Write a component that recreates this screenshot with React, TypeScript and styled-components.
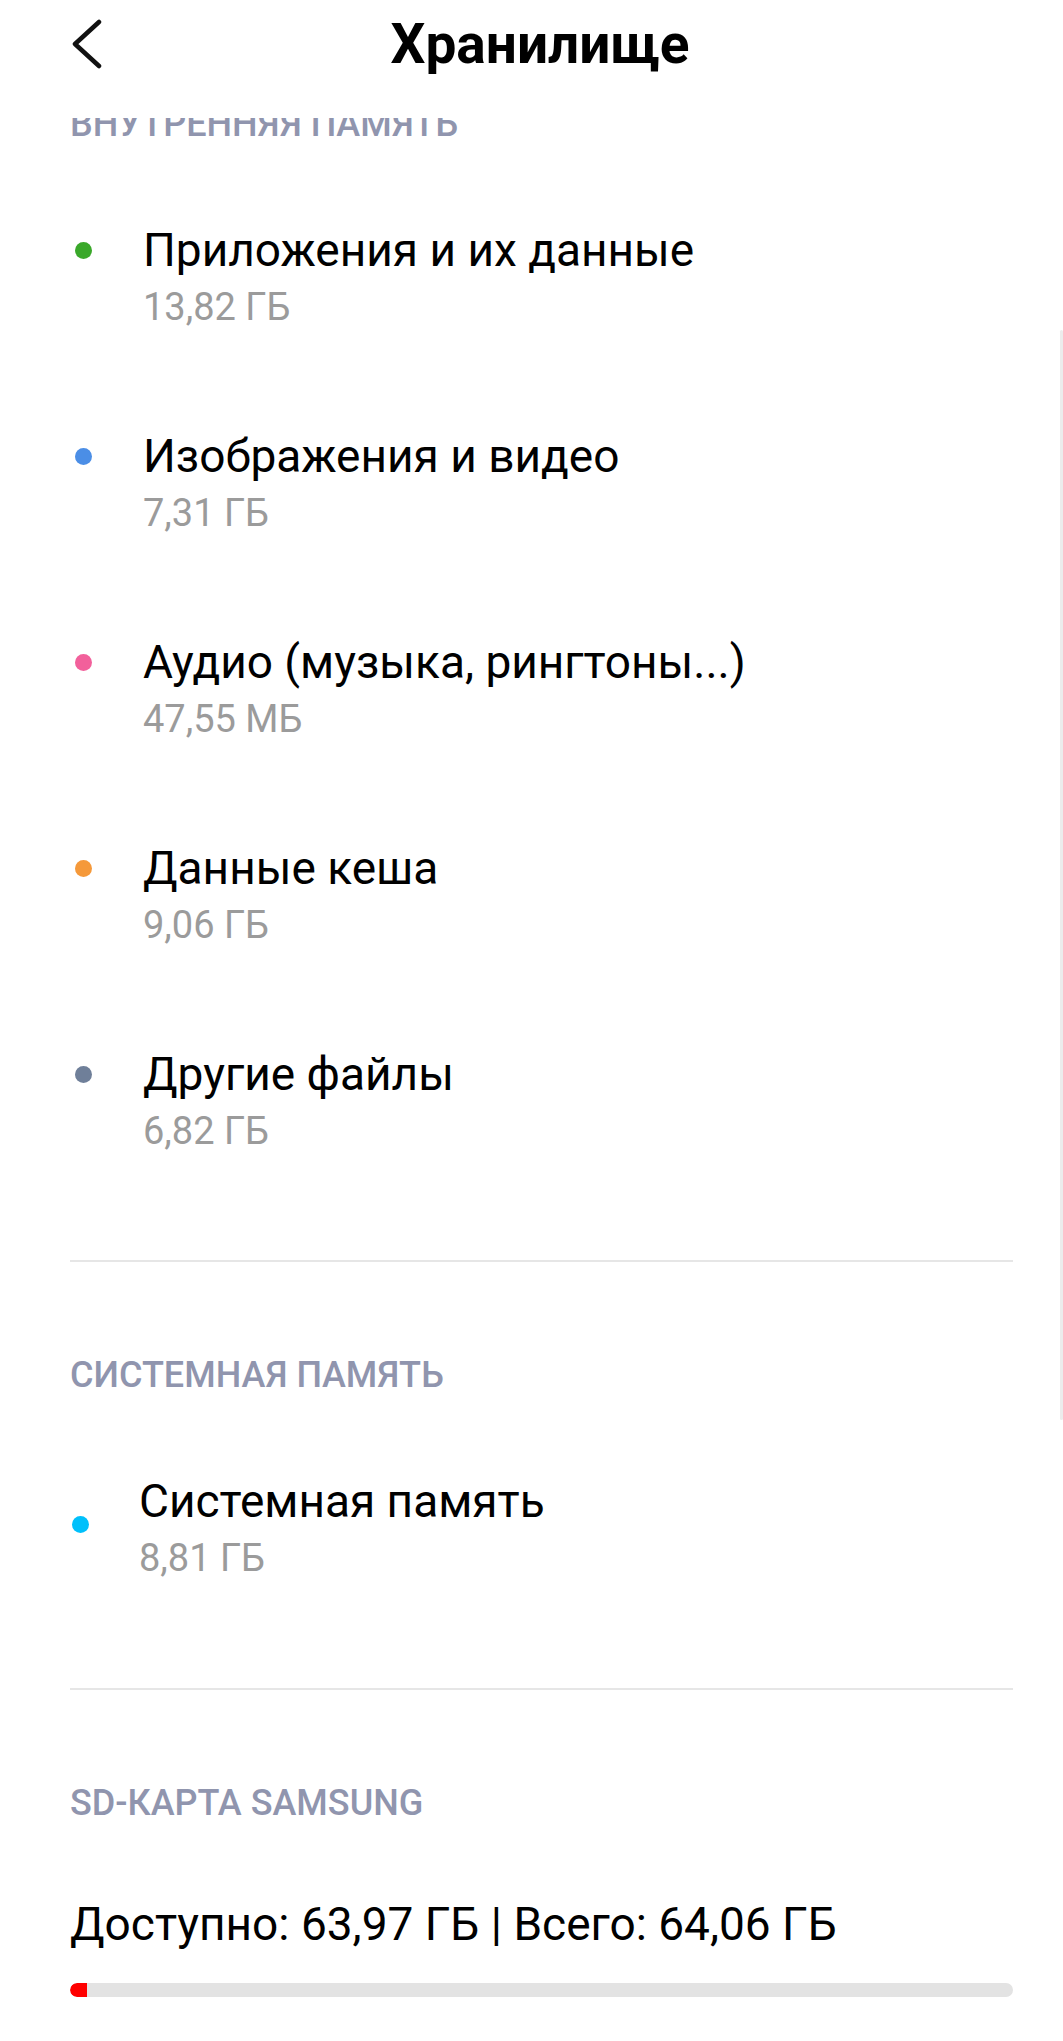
import React from "react";
import styled, { createGlobalStyle } from "styled-components";

const GlobalStyle = createGlobalStyle`
  html, body {
    margin: 0;
    padding: 0;
    background: #ffffff;
  }
  body {
    font-family: Roboto, "Noto Sans", "Liberation Sans", sans-serif;
    -webkit-font-smoothing: antialiased;
  }
`;

const Screen = styled.div`
  width: 1063px;
  height: 2041px;
  display: flex;
  flex-direction: column;
  overflow: hidden;
  background: #ffffff;
`;

const Header = styled.header`
  height: 118px;
  flex-shrink: 0;
  position: relative;
  z-index: 2;
  background: #ffffff;
`;

const HeaderRow = styled.div`
  height: 88px;
  display: grid;
  grid-template-columns: 120px 1fr 120px;
  align-items: center;
  padding-left: 17px;
`;

const BackButton = styled.button`
  border: 0;
  background: transparent;
  padding: 0;
  margin-left: 54px;
  width: 40px;
  height: 50px;
  display: flex;
  align-items: center;
  justify-content: flex-start;
  cursor: pointer;
`;

const Title = styled.h1`
  margin: 0;
  text-align: center;
  font-size: 55px;
  font-weight: 700;
  color: #000000;
  line-height: 88px;
  margin-left: -17px;
  padding-left: 17px;
`;

const ScrollArea = styled.div`
  flex: 1;
  overflow: hidden;
  position: relative;
`;

const ScrollContent = styled.div`
  margin-top: -15px;
`;

const ScrollThumb = styled.div`
  position: absolute;
  right: 0;
  top: 212px;
  width: 3px;
  height: 1090px;
  background: #ececec;
  border-radius: 2px;
`;

const Section = styled.section`
  padding: 0 50px 0 70px;
`;

const SectionTitle = styled.h2<{ $gapTop?: number }>`
  margin: ${(p) => p.$gapTop ?? 0}px 0 0;
  font-size: 36px;
  line-height: 42px;
  font-weight: 500;
  color: #9095ae;
  text-transform: uppercase;
`;

const List = styled.ul`
  list-style: none;
  margin: 29px 0 0;
  padding: 0;
`;

const Item = styled.li<{ $centered?: boolean }>`
  display: flex;
  align-items: ${(p) => (p.$centered ? "center" : "flex-start")};
  padding: 46px 0;
  margin-left: ${(p) => (p.$centered ? "-3px" : "0")};
`;

const DotCell = styled.div<{ $centered?: boolean }>`
  width: 73px;
  height: ${(p) => (p.$centered ? "auto" : "60px")};
  flex-shrink: 0;
  display: flex;
  align-items: center;
  margin-top: ${(p) => (p.$centered ? "-8px" : "0")};
`;

const Dot = styled.span<{ $color: string }>`
  display: block;
  width: 17px;
  height: 17px;
  margin-left: 5px;
  border-radius: 50%;
  background: ${(p) => p.$color};
`;

const ItemText = styled.div<{ $centered?: boolean }>`
  display: flex;
  flex-direction: column;
  margin-left: ${(p) => (p.$centered ? "-1px" : "0")};
`;

const ItemTitle = styled.span`
  font-size: 46px;
  line-height: 60px;
  color: #000000;
`;

const ItemSize = styled.span`
  font-size: 38px;
  line-height: 54px;
  color: #9b9b9b;
`;

const Divider = styled.hr<{ $gapTop: number }>`
  margin: ${(p) => p.$gapTop}px 50px 0 70px;
  border: 0;
  height: 2px;
  background: #e6e6e6;
`;

const Capacity = styled.p`
  margin: 70px 0 0;
  font-size: 46px;
  line-height: 60px;
  color: #000000;
`;

const Track = styled.div`
  margin-top: 29px;
  height: 14px;
  border-radius: 7px;
  background: #e3e3e3;
  overflow: hidden;
  display: flex;
`;

const Fill = styled.div`
  height: 100%;
  background: #ff0000;
  border-radius: 7px 0 0 7px;
`;

type Entry = { name: string; size: string; color: string };

const internal: Entry[] = [
  { name: "Приложения и их данные", size: "13,82 ГБ", color: "#3aa82a" },
  { name: "Изображения и видео", size: "7,31 ГБ", color: "#4b8ee6" },
  { name: "Аудио (музыка, рингтоны...)", size: "47,55 МБ", color: "#f2609b" },
  { name: "Данные кеша", size: "9,06 ГБ", color: "#f5993a" },
  { name: "Другие файлы", size: "6,82 ГБ", color: "#6f7f99" },
];

const BackIcon = () => (
  <svg width="34" height="50" viewBox="0 0 34 50" fill="none">
    <path
      d="M28 3 L4 25 L28 47"
      stroke="#111111"
      strokeWidth="4.5"
      strokeLinecap="round"
      strokeLinejoin="round"
    />
  </svg>
);

const StorageRow = ({ entry, centered }: { entry: Entry; centered?: boolean }) => (
  <Item $centered={centered}>
    <DotCell $centered={centered}>
      <Dot $color={entry.color} />
    </DotCell>
    <ItemText $centered={centered}>
      <ItemTitle>{entry.name}</ItemTitle>
      <ItemSize>{entry.size}</ItemSize>
    </ItemText>
  </Item>
);

const App = () => {
  const used = 64.06 - 63.97;
  const total = 64.06;
  const fillPct = Math.max((used / total) * 100, 1.8);

  return (
    <>
      <GlobalStyle />
      <Screen>
        <Header>
          <HeaderRow>
            <BackButton aria-label="Назад">
              <BackIcon />
            </BackButton>
            <Title>Хранилище</Title>
            <div />
          </HeaderRow>
        </Header>
        <ScrollArea>
          <ScrollThumb />
          <ScrollContent>
            <Section>
              <SectionTitle>Внутренняя память</SectionTitle>
              <List>
                {internal.map((e) => (
                  <StorageRow key={e.name} entry={e} />
                ))}
              </List>
            </Section>
            <Divider $gapTop={56} />
            <Section>
              <SectionTitle $gapTop={92}>Системная память</SectionTitle>
              <List>
                <StorageRow
                  centered
                  entry={{ name: "Системная память", size: "8,81 ГБ", color: "#00c0fb" }}
                />
              </List>
            </Section>
            <Divider $gapTop={57} />
            <Section>
              <SectionTitle $gapTop={92}>SD-карта Samsung</SectionTitle>
              <Capacity>Доступно: 63,97 ГБ | Всего: 64,06 ГБ</Capacity>
              <Track>
                <Fill style={{ width: `${fillPct}%` }} />
              </Track>
            </Section>
          </ScrollContent>
        </ScrollArea>
      </Screen>
    </>
  );
};

export default App;
